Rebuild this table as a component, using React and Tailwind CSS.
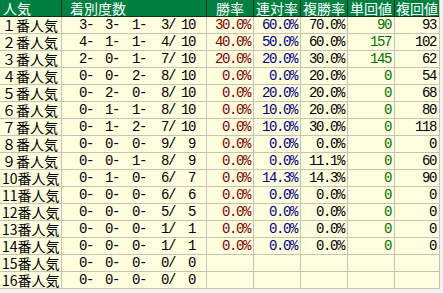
import React from "react";

const rows = [
  ["１番人気", "3", "3", "1", "3", "10", "30.0%", "60.0%", "70.0%", "90", "93"],
  ["２番人気", "4", "1", "1", "4", "10", "40.0%", "50.0%", "60.0%", "157", "102"],
  ["３番人気", "2", "0", "1", "7", "10", "20.0%", "20.0%", "30.0%", "145", "62"],
  ["４番人気", "0", "0", "2", "8", "10", "0.0%", "0.0%", "20.0%", "0", "54"],
  ["５番人気", "0", "2", "0", "8", "10", "0.0%", "20.0%", "20.0%", "0", "68"],
  ["６番人気", "0", "1", "1", "8", "10", "0.0%", "10.0%", "20.0%", "0", "80"],
  ["７番人気", "0", "1", "2", "7", "10", "0.0%", "10.0%", "30.0%", "0", "118"],
  ["８番人気", "0", "0", "0", "9", "9", "0.0%", "0.0%", "0.0%", "0", "0"],
  ["９番人気", "0", "0", "1", "8", "9", "0.0%", "0.0%", "11.1%", "0", "60"],
  ["10番人気", "0", "1", "0", "6", "7", "0.0%", "14.3%", "14.3%", "0", "90"],
  ["11番人気", "0", "0", "0", "6", "6", "0.0%", "0.0%", "0.0%", "0", "0"],
  ["12番人気", "0", "0", "0", "5", "5", "0.0%", "0.0%", "0.0%", "0", "0"],
  ["13番人気", "0", "0", "0", "1", "1", "0.0%", "0.0%", "0.0%", "0", "0"],
  ["14番人気", "0", "0", "0", "1", "1", "0.0%", "0.0%", "0.0%", "0", "0"],
  ["15番人気", "0", "0", "0", "0", "0", "", "", "", "", ""],
  ["16番人気", "0", "0", "0", "0", "0", "", "", "", "", ""],
];

const cols = "grid grid-cols-[61px_144px_46px_46px_46px_46px_44px] gap-x-px";
const jp = "font-['Noto_Sans_CJK_JP',sans-serif] text-[14px]";
const num = "font-['Liberation_Mono',monospace] text-[14px] tracking-[-1.4px]";

function Row({ r }) {
  const cell = "bg-[#ffffe0] h-[16px] leading-[16px]";
  return (
    <div className={cols}>
      <div className={`${cell} ${jp} pl-[2px] text-black whitespace-nowrap`}>{r[0]}</div>
      <div className={`${cell} ${num} flex text-black`}>
        <span className="w-[31px] text-right">{r[1]}-</span>
        <span className="w-[26px] text-right">{r[2]}-</span>
        <span className="w-[27px] text-right">{r[3]}-</span>
        <span className="w-[29px] text-right">{r[4]}/</span>
        <span className="w-[20px] text-right">{r[5]}</span>
      </div>
      <div className={`${cell} ${num} text-right pr-[3px] text-[#800000]`}>{r[6]}</div>
      <div className={`${cell} ${num} text-right pr-[3px] text-[#000080]`}>{r[7]}</div>
      <div className={`${cell} ${num} text-right pr-[3px] text-black`}>{r[8]}</div>
      <div className={`${cell} ${num} text-right pr-[3px] text-[#007000]`}>{r[9]}</div>
      <div className={`${cell} ${num} text-right pr-[3px] text-black`}>{r[10]}</div>
    </div>
  );
}

export default function App() {
  const head = `bg-[#008040] h-[16px] leading-[16px] text-white ${jp}`;
  return (
    <div className="w-[443px] h-[293px] bg-[#f2f2f2]">
      <div className="w-[440px] bg-[#c4c4b4] pr-px pb-px">
        <div className={`${cols} bg-[#10301a] pb-px`}>
          <div className={`${head} pl-[3px]`}>人気</div>
          <div className={`${head} pl-[8px]`}>着別度数</div>
          <div className={`${head} text-center`}>勝率</div>
          <div className={`${head} text-center`}>連対率</div>
          <div className={`${head} text-center`}>複勝率</div>
          <div className={`${head} text-center`}>単回値</div>
          <div className={`${head} text-center`}>複回値</div>
        </div>
        <div className="flex flex-col gap-y-px">
          {rows.map((r) => (
            <Row key={r[0]} r={r} />
          ))}
        </div>
      </div>
    </div>
  );
}
